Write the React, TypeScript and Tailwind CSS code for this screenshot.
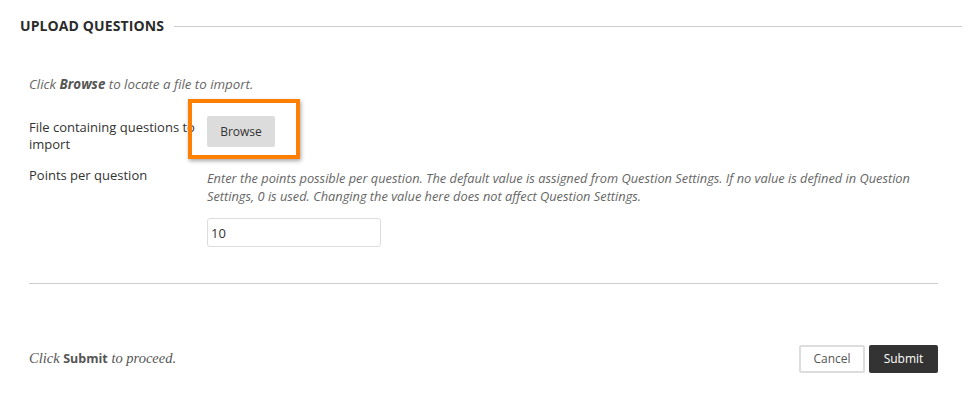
export default function App() {
  return (
    <div className="h-[402px] w-[976px] overflow-hidden bg-white font-['Open_Sans',sans-serif] text-[#333]">
      <div className="flex items-center gap-[10px] pl-5 pr-[14px] pt-[15px]">
        <h2 className="text-[14px] font-bold uppercase leading-[22px] tracking-[0.1px] text-[#2b2b2b]">Upload Questions</h2>
        <div className="h-px flex-1 bg-[#cccccc]" />
      </div>

      <div className="px-[29px]">
        <p className="mt-[38px] text-[13.3px] italic leading-[18px] text-[#666]">
          Click <b className="font-bold text-[#555]">Browse</b> to locate a file to import.
        </p>

        <div className="mt-[23px] flex">
          <label className="w-[178px] shrink-0 pt-[3px] text-[13px] leading-[17px]">
            <span className="block w-[170px]">File containing questions to import</span>
          </label>
          <div className="relative">
            <button
              type="button"
              className="h-[31px] w-[68px] rounded-[2px] bg-[#dcdcdc] text-[12px] text-[#333]"
            >
              Browse
            </button>
            <div className="pointer-events-none absolute -left-[19px] -top-[17px] h-[60px] w-[112px] border-4 border-[#ff8000] shadow-[1px_2px_4px_rgba(0,0,0,0.35)]" />
          </div>
        </div>

        <div className="mt-[14px] flex">
          <label className="w-[178px] shrink-0 text-[13px] leading-[17px]">Points per question</label>
          <div className="flex-1 pt-[2px]">
            <p className="pr-[20px] text-[12.8px] italic leading-[18px] text-[#666]">
              Enter the points possible per question. The default value is assigned from Question Settings. If no value is defined in Question Settings, 0 is used. Changing the value here does not affect Question Settings.
            </p>
            <input
              type="text"
              defaultValue="10"
              className="mt-[13px] h-[29px] w-[174px] rounded-[3px] border border-[#dddddd] px-[3px] text-[13px] text-[#333] outline-none"
            />
          </div>
        </div>

        <div className="mt-[36px] h-px w-[909px] bg-[#cccccc]" />

        <div className="mt-[61px] flex items-center justify-between pr-[9px]">
          <p className="font-['Liberation_Serif',serif] text-[14.5px] italic text-[#555]">
            Click <b className="font-['Open_Sans',sans-serif] text-[12.5px] font-bold not-italic">Submit</b> to proceed.
          </p>
          <div className="flex gap-1">
            <button
              type="button"
              className="h-[28px] w-[66px] rounded-[2px] border-2 border-[#dddddd] bg-white text-[12px] text-[#555]"
            >
              Cancel
            </button>
            <button
              type="button"
              className="h-[28px] w-[69px] rounded-[2px] bg-[#333333] text-[12px] text-white"
            >
              Submit
            </button>
          </div>
        </div>
      </div>
    </div>
  );
}
